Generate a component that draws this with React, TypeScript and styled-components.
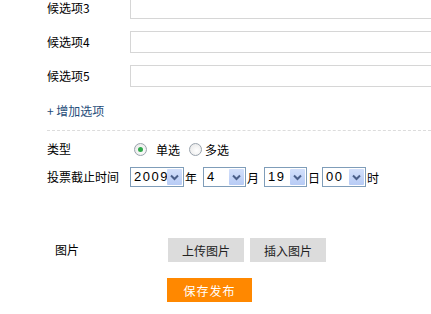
import React from "react";
import styled, { createGlobalStyle } from "styled-components";

const GlobalStyle = createGlobalStyle`
  html, body {
    margin: 0;
    padding: 0;
    background: #fff;
    overflow: hidden;
  }
  body {
    font-family: "Noto Sans CJK SC", "Liberation Sans", sans-serif;
    font-size: 12px;
    color: #000;
  }
`;

const Form = styled.div`
  margin-top: -3px;
  padding-left: 47px;
  width: 600px;
`;

const OptionRow = styled.div`
  display: flex;
  align-items: center;
  height: 22px;
  margin-bottom: 12px;
`;

const Label = styled.div<{ $w?: number }>`
  width: ${(p) => p.$w ?? 83}px;
  flex: none;
  line-height: 16px;
  white-space: nowrap;
`;

const TextInput = styled.input`
  box-sizing: border-box;
  width: 340px;
  height: 22px;
  border: 1px solid #d6d6d6;
  outline: none;
  padding: 0 4px;
  margin: 0;
  font: inherit;
`;

const AddLink = styled.a`
  display: block;
  margin-top: 16px;
  height: 16px;
  line-height: 16px;
  color: #1f4d7a;
  text-decoration: none;
  cursor: pointer;
`;

const Divider = styled.div`
  margin-top: 11px;
  width: 384px;
  border-top: 1px dashed #dcdcdc;
`;

const FieldRow = styled.div<{ $mt: number }>`
  display: flex;
  align-items: center;
  height: 20px;
  margin-top: ${(p) => p.$mt}px;
`;

const RadioItem = styled.label`
  display: flex;
  align-items: center;
  margin-right: 5px;
  cursor: pointer;
`;

const RadioDot = styled.span<{ $on?: boolean }>`
  box-sizing: border-box;
  width: 13px;
  height: 13px;
  margin-left: 4px;
  margin-right: ${(p) => (p.$on ? 9 : 3)}px;
  border-radius: 50%;
  border: 1px solid #9aa3ad;
  background: radial-gradient(circle at 60% 60%, #ffffff 0%, #e4e4e4 100%);
  display: flex;
  align-items: center;
  justify-content: center;
  &::after {
    content: "";
    display: ${(p) => (p.$on ? "block" : "none")};
    width: 5px;
    height: 5px;
    border-radius: 50%;
    background: #2fa84a;
  }
`;

const SelectBox = styled.div<{ $w: number }>`
  box-sizing: border-box;
  width: ${(p) => p.$w}px;
  height: 20px;
  border: 1px solid #7f9db9;
  background: #fff;
  display: flex;
  align-items: stretch;
  padding: 1px;
`;

const SelectValue = styled.span`
  flex: 1;
  overflow: hidden;
  white-space: nowrap;
  padding-left: 2px;
  font-family: "Liberation Sans", sans-serif;
  font-size: 13px;
  letter-spacing: 1.5px;
  line-height: 16px;
  color: #000;
`;

const DropBtn = styled.span`
  width: 15px;
  flex: none;
  background: linear-gradient(#d3e0fb, #b7cbf5);
  border-radius: 1px;
  display: flex;
  align-items: center;
  justify-content: center;
`;

const Unit = styled.span<{ $gap: number }>`
  margin-left: 1px;
  margin-right: ${(p) => p.$gap}px;
`;

const PicRow = styled.div`
  display: flex;
  align-items: center;
  margin-top: 51px;
  padding-left: 8px;
`;

const GrayButton = styled.button`
  box-sizing: border-box;
  height: 24px;
  width: 76px;
  margin-right: 6px;
  border: none;
  background: #dcdcdc;
  color: #222;
  font: inherit;
  padding: 0;
  cursor: pointer;
`;

const SaveRow = styled.div`
  margin-top: 16px;
  padding-left: 120px;
`;

const SaveButton = styled.button`
  box-sizing: border-box;
  height: 24px;
  width: 85px;
  border: none;
  background: #ff8800;
  color: #fff;
  font: inherit;
  letter-spacing: 1px;
  padding: 0;
  cursor: pointer;
`;

function Chevron() {
  return (
    <svg width="9" height="7" viewBox="0 0 9 7">
      <path d="M1 1.5 L4.5 5 L8 1.5" fill="none" stroke="#4a5f8a" strokeWidth="2" />
    </svg>
  );
}

function FakeSelect({ value, w }: { value: string; w: number }) {
  return (
    <SelectBox $w={w}>
      <SelectValue>{value}</SelectValue>
      <DropBtn>
        <Chevron />
      </DropBtn>
    </SelectBox>
  );
}

export default function App() {
  return (
    <>
      <GlobalStyle />
      <Form>
        {["候选项3", "候选项4", "候选项5"].map((t) => (
          <OptionRow key={t}>
            <Label>{t}</Label>
            <TextInput />
          </OptionRow>
        ))}
        <AddLink>+ 增加选项</AddLink>
        <Divider />
        <FieldRow $mt={8}>
          <Label>类型</Label>
          <RadioItem>
            <RadioDot $on />
            单选
          </RadioItem>
          <RadioItem>
            <RadioDot />
            多选
          </RadioItem>
        </FieldRow>
        <FieldRow $mt={8}>
          <Label>投票截止时间</Label>
          <FakeSelect value="2009" w={54} />
          <Unit $gap={6}>年</Unit>
          <FakeSelect value="4" w={43} />
          <Unit $gap={5}>月</Unit>
          <FakeSelect value="19" w={43} />
          <Unit $gap={2}>日</Unit>
          <FakeSelect value="00" w={44} />
          <Unit $gap={0}>时</Unit>
        </FieldRow>
        <PicRow>
          <Label $w={113}>图片</Label>
          <GrayButton>上传图片</GrayButton>
          <GrayButton>插入图片</GrayButton>
        </PicRow>
        <SaveRow>
          <SaveButton>保存发布</SaveButton>
        </SaveRow>
      </Form>
    </>
  );
}
